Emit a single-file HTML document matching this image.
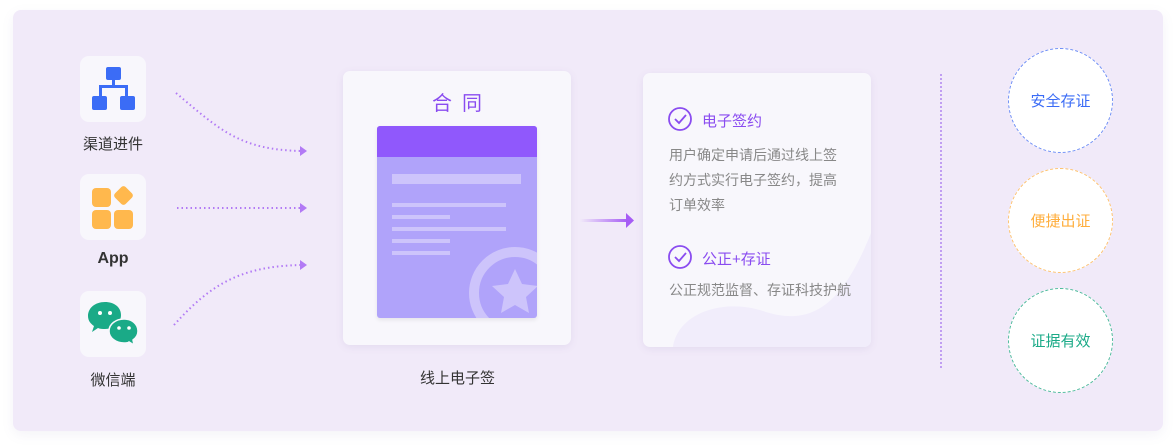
<!DOCTYPE html>
<html><head><meta charset="utf-8"><style>
*{margin:0;padding:0;box-sizing:border-box}
body{width:1176px;height:447px;background:#fff;font-family:"Liberation Sans","Noto Sans CJK SC",sans-serif;position:relative;overflow:hidden}
.panel{position:absolute;left:13px;top:10px;width:1150px;height:421px;background:#f1eaf9;border-radius:8px;box-shadow:0 4px 12px rgba(120,100,160,.08)}
.ab{position:absolute}
.ib{position:absolute;left:80px;width:66px;height:66px;background:#f8f7fc;border-radius:9px}
.lbl{position:absolute;left:63px;width:100px;text-align:center;font-size:15px;color:#333}
.card{position:absolute;background:#f8f7fc;border-radius:7px;box-shadow:0 2px 8px rgba(120,100,160,.1);overflow:hidden}
.circ{position:absolute;left:1008px;width:105px;height:105px;border-radius:50%;background:#fff;border:1px dashed;display:flex;align-items:center;justify-content:center;font-size:15px}
.t{position:absolute;font-size:14px;color:#888;line-height:25px}
.h{position:absolute;font-size:15px;color:#8a4cf0}
</style></head><body>
<div class="panel"></div>
<div class="ib" style="top:56px"><svg width="66" height="66"><g fill="#3b6cf6"><rect x="26" y="11" width="15" height="13" rx="2"/><rect x="12" y="40" width="15" height="14" rx="2"/><rect x="40" y="40" width="15" height="14" rx="2"/><path d="M32 24h3v5h13v11h-3v-8H22v8h-3V29h13z"/></g></svg></div>
<div class="lbl" style="top:133px">渠道进件</div>
<div class="ib" style="top:174px"><svg width="66" height="66"><g fill="#ffb84d"><rect x="12" y="14" width="19" height="19" rx="4"/><rect x="12" y="36" width="19" height="19" rx="4"/><rect x="34" y="36" width="19" height="19" rx="4"/><rect x="36" y="14" width="15" height="15" rx="3" transform="rotate(45 43.5 21.5)"/></g></svg></div>
<div class="lbl" style="top:250px;font-weight:bold;font-size:16px">App</div>
<div class="ib" style="top:291px"><svg width="66" height="66"><path d="M25 11c-10 0-17 6-17 14 0 5 3 8 6 10l-2 6 6-4c2 1 5 1 7 1 9 0 16-6 16-14s-7-13-16-13z" fill="#1aaa87"/><circle cx="20" cy="22" r="2" fill="#fff"/><circle cx="30" cy="22" r="2" fill="#fff"/><path d="M44 28c-8 0-15 5-15 12s7 12 15 12c2 0 4 0 5-1l5 3-1-5c3-2 5-5 5-9 0-7-6-12-14-12z" fill="#1aaa87" stroke="#f8f7fc" stroke-width="1.5"/><circle cx="39" cy="37" r="1.8" fill="#fff"/><circle cx="49" cy="37" r="1.8" fill="#fff"/></svg></div>
<div class="lbl" style="top:369px">微信端</div>
<svg class="ab" style="left:0;top:0" width="340" height="447"><g fill="none" stroke="#b27af5" stroke-width="2" stroke-dasharray="1.5 3"><path d="M176 93C220 130 240 150 302 151"/><path d="M177 208H302"/><path d="M174 325C210 285 240 266 302 265"/></g><g fill="#b27af5"><path d="M300 146l7 5-7 5z"/><path d="M300 203l7 5-7 5z"/><path d="M300 260l7 5-7 5z"/></g></svg>
<div class="card" style="left:343px;top:71px;width:228px;height:274px">
<div class="ab" style="left:0;width:228px;top:16px;text-align:center;font-size:20px;color:#8a4cf0;letter-spacing:10px;padding-left:10px">合同</div>
<div class="ab" style="left:34px;top:55px;width:160px;height:192px;background:#b0a3fa;border-radius:3px;overflow:hidden;box-shadow:0 2px 4px rgba(0,0,0,.08)">
<div style="height:31px;background:#9058fc"></div>
<div class="ab" style="left:15px;top:48px;width:129px;height:10px;background:#cdc4fb"></div>
<div class="ab" style="left:15px;top:77px;width:114px;height:4px;background:#cdc4fb"></div>
<div class="ab" style="left:15px;top:89px;width:58px;height:4px;background:#cdc4fb"></div>
<div class="ab" style="left:15px;top:101px;width:114px;height:4px;background:#cdc4fb"></div>
<div class="ab" style="left:15px;top:113px;width:58px;height:4px;background:#cdc4fb"></div>
<div class="ab" style="left:15px;top:125px;width:58px;height:4px;background:#cdc4fb"></div>
<svg class="ab" style="left:90px;top:115px" width="80" height="80"><circle cx="48" cy="52" r="41" fill="none" stroke="#cdc4fb" stroke-width="10"/><path d="M48 28l7 15 16 2-12 11 3 16-14-8-14 8 3-16-12-11 16-2z" fill="#cdc4fb"/></svg>
</div></div>
<svg class="ab" style="left:578px;top:211px" width="58" height="18"><defs><linearGradient id="g"><stop offset="0" stop-color="#a65cf5" stop-opacity="0"/><stop offset="1" stop-color="#a65cf5"/></linearGradient></defs><rect x="2" y="8" width="48" height="3" fill="url(#g)"/><path d="M48 2l8 7.5-8 7.5z" fill="#a65cf5"/></svg>
<div class="card" style="left:643px;top:73px;width:228px;height:274px">
<svg class="ab" style="left:0;top:0" width="228" height="274"><path d="M30 274C35 240 80 225 120 238C170 255 200 230 228 160V274Z" fill="#f1edfb"/></svg>
<svg class="ab" style="left:25px;top:34px" width="26" height="26"><circle cx="12" cy="12" r="11" fill="none" stroke="#8a4cf0" stroke-width="1.8"/><path d="M7 12l4 4 7-8" fill="none" stroke="#8a4cf0" stroke-width="1.8"/></svg>
<div class="h" style="left:59px;top:37px">电子签约</div>
<div class="t" style="left:26px;top:70px;width:172px">用户确定申请后通过线上签约方式实行电子签约，提高订单效率</div>
<svg class="ab" style="left:25px;top:172px" width="26" height="26"><circle cx="12" cy="12" r="11" fill="none" stroke="#8a4cf0" stroke-width="1.8"/><path d="M7 12l4 4 7-8" fill="none" stroke="#8a4cf0" stroke-width="1.8"/></svg>
<div class="h" style="left:59px;top:175px">公正+存证</div>
<div class="t" style="left:26px;top:205px;width:200px">公正规范监督、存证科技护航</div>
</div>
<div class="ab" style="left:380px;top:367px;width:155px;text-align:center;font-size:15px;color:#333">线上电子签</div>
<div class="ab" style="left:940px;top:74px;height:294px;border-left:2px dotted #c09ef2"></div>
<div class="circ" style="top:48px;border-color:#6d8ef6;color:#3b6cf6">安全存证</div>
<div class="circ" style="top:168px;border-color:#ffc36e;color:#ffae3d">便捷出证</div>
<div class="circ" style="top:288px;border-color:#4cbb9b;color:#1aaa87">证据有效</div>
</body></html>
